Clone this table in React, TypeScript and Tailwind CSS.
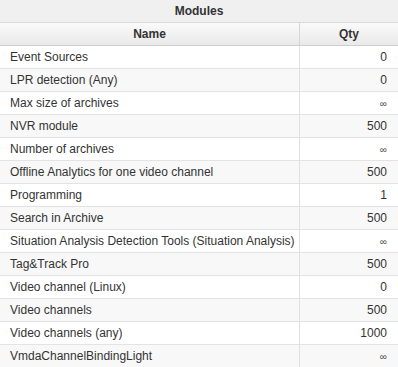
import React from "react";

const rows: [string, string][] = [
  ["Event Sources", "0"],
  ["LPR detection (Any)", "0"],
  ["Max size of archives", "∞"],
  ["NVR module", "500"],
  ["Number of archives", "∞"],
  ["Offline Analytics for one video channel", "500"],
  ["Programming", "1"],
  ["Search in Archive", "500"],
  ["Situation Analysis Detection Tools (Situation Analysis)", "∞"],
  ["Tag&Track Pro", "500"],
  ["Video channel (Linux)", "0"],
  ["Video channels", "500"],
  ["Video channels (any)", "1000"],
  ["VmdaChannelBindingLight", "∞"],
];

export default function App() {
  return (
    <div
      className="w-[398px] h-[367px] overflow-hidden bg-white text-[#333] text-[12px]"
      style={{ fontFamily: '"Liberation Sans", Arial, sans-serif' }}
    >
      <div className="h-[23px] flex items-center justify-center font-bold bg-[#f0f0f0] border-b border-[#d9d9d9]">
        Modules
      </div>
      <div className="flex h-[23px] bg-gradient-to-b from-[#fafafa] to-[#e9e9e9] border-b border-[#cfcfcf] font-bold">
        <div className="w-[300px] flex items-center justify-center border-r border-[#d6d6d6]">Name</div>
        <div className="flex-1 flex items-center justify-center">Qty</div>
      </div>
      {rows.map(([name, qty], i) => (
        <div
          key={name}
          className={`flex h-[23px] border-b border-[#e3e3e3] ${i % 2 === 1 ? "bg-[#f8f8f8]" : "bg-white"}`}
        >
          <div className="w-[300px] flex items-center pl-[10px] border-r border-[#e0e0e0] whitespace-nowrap overflow-hidden">
            {name}
          </div>
          <div className={`flex-1 flex items-center justify-end pr-[11px] ${qty === "∞" ? "text-[10px] text-[#555]" : ""}`}>
            {qty}
          </div>
        </div>
      ))}
    </div>
  );
}
